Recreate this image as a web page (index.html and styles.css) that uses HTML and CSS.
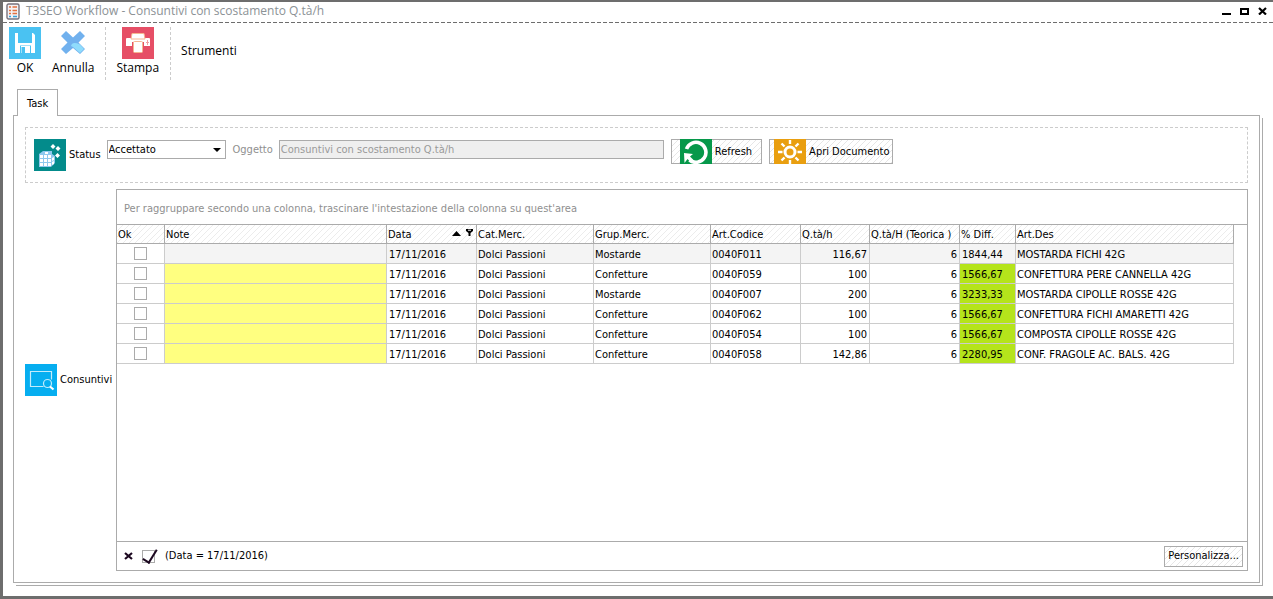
FILE: index.html
```html
<!DOCTYPE html>
<html lang="it">
<head>
<meta charset="utf-8">
<title>T3SEO Workflow - Consuntivi con scostamento Q.tà/h</title>
<link rel="stylesheet" href="styles.css">
</head>
<body>
<div class="window">
  <header class="titlebar">
    <svg class="app-icon" width="14" height="17" viewBox="0 0 14 17"><rect x="1" y="1" width="12" height="15" rx="1.5" fill="#f4f2f4" stroke="#77727c" stroke-width="1.4"/><path d="M3 4h2M3 7.500h2M3 10.500h2M6.500 4h4.500M6.500 7.500h4.500M6.500 10.500h4.500" stroke="#e2703f" stroke-width="1.400"/><path d="M3 13.500h2M7 13.500h4" stroke="#3aa0d8" stroke-width="1.600"/></svg>
    <h1 class="title">T3SEO Workflow - Consuntivi con scostamento Q.tà/h</h1>
    <div class="window-buttons">
      <button class="win-btn" type="button" aria-label="Riduci"><svg width="9" height="8"><path d="M0 7h9" stroke="#000" stroke-width="2"/></svg></button>
      <button class="win-btn" type="button" aria-label="Ingrandisci"><svg width="9" height="8"><rect x="1" y="2" width="7" height="5" fill="none" stroke="#000" stroke-width="2"/></svg></button>
      <button class="win-btn" type="button" aria-label="Chiudi"><svg width="9" height="8"><path d="M1 1l7 6.500M8 1l-7 6.500" stroke="#000" stroke-width="2.200"/></svg></button>
    </div>
  </header>

  <nav class="toolbar">
    <button class="tool" type="button">
      <svg width="32" height="32" viewBox="0 0 32 32"><rect width="32" height="32" fill="#4ac2f2"/><path d="M6 6h3v10h14V6h1l2 2v18H6z" fill="#fff"/><path d="M11 26v-7.500h11V26z" fill="#4ac2f2"/><path d="M12 26v-7h9v7z" fill="#fff"/><rect x="12.500" y="20" width="3.500" height="6" fill="#4ac2f2"/></svg>
      <span>OK</span>
    </button>
    <button class="tool" type="button">
      <svg width="32" height="32" viewBox="0 0 32 32"><path d="M9 4l7 6.500L23 4l5 5-6.500 6.500L28 22l-5 5-7-6-7 6-5-5 6.500-6.500L4 9z" fill="#71b1ee"/><path d="M14 19q1-5 9-1.500l4 4.500-4 4-7-6z" fill="#8fdcfc"/></svg>
      <span>Annulla</span>
    </button>
    <div class="tool-sep"></div>
    <button class="tool" type="button">
      <svg width="32" height="32" viewBox="0 0 32 32"><rect width="32" height="32" fill="#e64f66"/><path d="M4 12q0-1 1-1h22q1 0 1 1v7h-6v-4H10v4H4z" fill="#fff"/><path d="M10 6.500h12l1 5.500H9z" fill="#fff" stroke="#f6b791"/><rect x="11.500" y="14.500" width="9" height="11" rx="1" fill="#fff" stroke="#f6b791"/><path d="M25.500 13v5M24 15.500h3" stroke="#f19da0"/></svg>
      <span>Stampa</span>
    </button>
    <div class="tool-sep"></div>
    <button class="tool-text" type="button">Strumenti</button>
  </nav>

  <main class="content">
    <div class="tabs" role="tablist"><button class="tab" type="button" role="tab" aria-selected="true">Task</button></div>
    <section class="page">
      <form class="task-bar">
        <svg width="32" height="32" viewBox="0 0 32 32"><rect width="32" height="32" fill="#038b8b"/><path d="M5 15l4-3h9v3l3 2v7l-4 4H5z" fill="#8fc9ee"/><g fill="#fff"><path d="M19 5l2.500 2.500L19 10l-2.500-2.500zM24 7l2.500 2.500L24 12l-2.500-2.500zM23.500 14l2.500 2.500-2.500 2.500-2.500-2.500z"/><path d="M6 16h3v3H6zM10 16h3v3h-3zM14 16h3v3h-3zM6 20h3v3H6zM10 20h3v3h-3zM14 20h3v3h-3zM6 24h3v3H6zM10 24h3v3h-3zM14 24h3v3h-3zM11 13h3v2h-3zM18 19l2-1v3l-2 1zM18 23l2-1v3l-2 1z"/></g></svg>
        <label class="status-label" for="status">Status</label>
        <span class="combo"><select id="status"><option>Accettato</option></select></span>
        <label class="muted" for="oggetto">Oggetto</label>
        <input class="subject" id="oggetto" type="text" value="Consuntivi con scostamento Q.tà/h" disabled>
        <button class="btn btn-refresh" type="button"><svg width="32" height="25" viewBox="0 0 32 25"><rect width="32" height="25" fill="#06984a"/><path d="M6.500 10a10 10 0 1 1 3 11" fill="none" stroke="#fff" stroke-width="3.600"/><path d="M4 14l9 1-3 2.500 4 4-2.500 2.500-4-4L4.500 24z" fill="#fff"/></svg>Refresh</button>
        <button class="btn btn-open" type="button"><svg width="32" height="25" viewBox="0 0 32 25"><rect width="32" height="25" fill="#e99f10"/><circle cx="16" cy="13" r="5" fill="none" stroke="#fff" stroke-width="3"/><path d="M16 1v4M16 21v4M4 13h4.500M23.500 13H28M7.500 4.500l3 3M24.500 4.500l-3 3M7.500 21.500l3-3M24.500 21.500l-3-3" stroke="#fff" stroke-width="2.400"/></svg>Apri Documento</button>
      </form>

      <div class="detail">
        <div class="side-label">
          <svg width="32" height="32" viewBox="0 0 32 32"><rect width="32" height="32" fill="#06aef0"/><path d="M18.500 22.500h-13v-15h21v8" fill="none" stroke="#c3ebfb" stroke-width="1.200"/><circle cx="22.500" cy="19.500" r="4" fill="none" stroke="#c3ebfb" stroke-width="1.200"/><path d="M25 22.500l3.500 3" stroke="#fff" stroke-width="2.200"/></svg>
          <span>Consuntivi</span>
        </div>
        <div class="grid">
          <div class="group-bar">Per raggruppare secondo una colonna, trascinare l'intestazione della colonna su quest'area</div>
          <div class="grid-body">
            <table class="rows">
              <colgroup><col class="c-ok"><col class="c-note"><col class="c-date"><col class="c-cat"><col class="c-cat"><col class="c-date"><col class="c-qty"><col class="c-date"><col class="c-diff"><col></colgroup>
              <thead><tr><th>Ok</th><th>Note</th><th><span class="sorted">Data<svg width="22" height="9" viewBox="0 0 22 9"><path d="M0 8l4.500-5L9 8z"/><path d="M14 1h7v2l-2.500 2v3h-2V5L14 3z"/><path d="M16 2.200h3" stroke="#fff"/></svg></span></th><th>Cat.Merc.</th><th>Grup.Merc.</th><th>Art.Codice</th><th>Q.tà/h</th><th>Q.tà/H (Teorica )</th><th>% Diff.</th><th>Art.Des</th></tr></thead>
              <tbody>
                <tr class="current"><td class="ok"><input type="checkbox" aria-label="Ok 0040F011"></td><td class="note"></td><td class="date">17/11/2016</td><td>Dolci Passioni</td><td>Mostarde</td><td>0040F011</td><td class="num">116,67</td><td class="num">6</td><td class="diff">1844,44</td><td>MOSTARDA FICHI 42G</td></tr>
                <tr><td class="ok"><input type="checkbox" aria-label="Ok 0040F059"></td><td class="note"></td><td class="date">17/11/2016</td><td>Dolci Passioni</td><td>Confetture</td><td>0040F059</td><td class="num">100</td><td class="num">6</td><td class="diff">1566,67</td><td>CONFETTURA PERE CANNELLA 42G</td></tr>
                <tr><td class="ok"><input type="checkbox" aria-label="Ok 0040F007"></td><td class="note"></td><td class="date">17/11/2016</td><td>Dolci Passioni</td><td>Mostarde</td><td>0040F007</td><td class="num">200</td><td class="num">6</td><td class="diff">3233,33</td><td>MOSTARDA CIPOLLE ROSSE 42G</td></tr>
                <tr><td class="ok"><input type="checkbox" aria-label="Ok 0040F062"></td><td class="note"></td><td class="date">17/11/2016</td><td>Dolci Passioni</td><td>Confetture</td><td>0040F062</td><td class="num">100</td><td class="num">6</td><td class="diff">1566,67</td><td>CONFETTURA FICHI AMARETTI 42G</td></tr>
                <tr><td class="ok"><input type="checkbox" aria-label="Ok 0040F054"></td><td class="note"></td><td class="date">17/11/2016</td><td>Dolci Passioni</td><td>Confetture</td><td>0040F054</td><td class="num">100</td><td class="num">6</td><td class="diff">1566,67</td><td>COMPOSTA CIPOLLE ROSSE 42G</td></tr>
                <tr><td class="ok"><input type="checkbox" aria-label="Ok 0040F058"></td><td class="note"></td><td class="date">17/11/2016</td><td>Dolci Passioni</td><td>Confetture</td><td>0040F058</td><td class="num">142,86</td><td class="num">6</td><td class="diff">2280,95</td><td>CONF. FRAGOLE AC. BALS. 42G</td></tr>
              </tbody>
            </table>
          </div>
          <div class="filter-bar">
            <button class="clear" type="button" aria-label="Rimuovi filtro"><svg width="9" height="8"><path d="M1 1l7 6M8 1l-7 6" stroke="#1c0820" stroke-width="2.200"/></svg></button>
            <input class="filter-on" id="filtro" type="checkbox" checked>
            <label for="filtro">(Data = 17/11/2016)</label>
            <button class="btn btn-custom" type="button">Personalizza...</button>
          </div>
        </div>
      </div>
    </section>
  </main>
</div>
</body>
</html>
```
FILE: styles.css
```css
* { box-sizing: border-box; }
body {
  margin: 0;
  background: #fff;
  color: #000;
  font: 11px/14px "DejaVu Sans Condensed", "Noto Sans", sans-serif;
}
button, input, select { font: inherit; color: inherit; margin: 0; }
button { border: 0; background: none; padding: 0; }
svg { display: block; flex: none; }
.window {
  min-height: 100vh;
  display: flex;
  flex-direction: column;
  border: solid #6d6d6d;
  border-width: 2px 0 3px 3px;
}
.titlebar {
  height: 21px;
  display: flex;
  align-items: center;
  padding: 0 6px 3px 3px;
  background: repeating-linear-gradient(90deg, #6d6d6d 0 4px, #fff 4px 6px) left bottom / 100% 1px no-repeat;
}
.title { margin: 0 auto 0 6px; font: 12px/16px "Open Sans", sans-serif; color: #8c9296; }
.window-buttons { display: flex; gap: 9px; }
.toolbar {
  display: flex;
  align-items: flex-start;
  padding: 4px 6px 0;
}
.tool { display: flex; flex-direction: column; align-items: center; gap: 1px; min-width: 32px; margin-right: 11px; font: 12px/16px "Open Sans", sans-serif; }
.tool-sep { height: 53px; border-left: 1px dashed #ccc; margin-right: 10px; }
.tool-text { padding-top: 16px; font: 12px/16px "Open Sans", sans-serif; }
.content { flex: 1; display: flex; flex-direction: column; padding: 9px 13px 13px 10px; }
.tabs { display: flex; padding-left: 4px; margin-bottom: -1px; z-index: 1; }
.tab { height: 27px; padding: 2px 9px 0; border: 1px solid #ababab; border-bottom: 0; background: #fff; }
.page {
  flex: 1;
  display: flex;
  flex-direction: column;
  gap: 6px;
  padding: 11px;
  border: 1px solid #ababab;
  box-shadow: 2px 2px 0 #fff, 3px 3px 0 #ababab;
  background: #fff;
}
.task-bar { display: flex; align-items: flex-start; height: 56px; padding: 11px 8px; border: 1px dashed #ccc; }
.status-label { padding: 9px 6px 0 3px; }
.muted { padding: 4px 6px 0 7px; color: #8f8f8f; }
.combo { position: relative; width: 119px; height: 19px; margin-top: 1px; border: 1px solid #ababab; }
.combo select { width: 100%; height: 17px; padding: 0 1px; border: 0; background: none; appearance: none; }
.combo::after { content: ""; position: absolute; right: 4px; top: 7px; border: solid transparent; border-width: 4px 4px 0; border-top-color: #000; }
.subject { width: 385px; height: 19px; margin: 1px 7px 0 0; padding: 0 1px; border: 1px solid #ababab; background: #efefef; color: #9a9a9a; }
.btn {
  display: flex;
  align-items: center;
  height: 25px;
  border: 1px solid #ababab;
  background: linear-gradient(135deg, #fff 42%, #e6e6e6 42% 58%, #fff 58%) 0 0 / 6px 6px;
}
.btn svg { margin: -1px 3px -1px 0; }
.btn-refresh { padding: 0 9px 0 8px; margin-right: 7px; }
.btn-open { padding: 0 3px 0 4px; }
.detail { flex: 1; display: flex; }
.side-label { display: flex; align-items: center; gap: 3px; width: 91px; }
.grid { flex: 1; display: flex; flex-direction: column; border: 1px solid #ababab; }
.group-bar { padding: 12px 7px 8px; color: #8f8f8f; border-bottom: 1px solid #ababab; }
.grid-body { flex: 1; padding-right: 13px; }
.rows { width: 100%; table-layout: fixed; border-collapse: separate; border-spacing: 0; }
.c-ok { width: 48px; }
.c-note { width: 222px; }
.c-date { width: 90px; }
.c-cat { width: 117px; }
.c-qty { width: 69px; }
.c-diff { width: 56px; }
.rows th, .rows td {
  padding: 2px 2px 0 1px;
  border: solid #ccc;
  border-width: 0 1px 1px 0;
  text-align: left;
  font-weight: normal;
  white-space: nowrap;
  line-height: 14px;
}
.rows th { height: 19px; border-color: #ababab; background: linear-gradient(135deg, #fff 42%, #ececec 42% 58%, #fff 58%) 0 0 / 6px 6px; }
.rows td { height: 20px; }
.rows .current td { background: #f4f4f4; }
.rows .ok, .rows .current .ok { padding-top: 0; background: #fff; }
.rows .note { background: #ffff80; }
.rows .date { padding-left: 2px; }
.rows .num { text-align: right; }
.rows .diff { padding-left: 2px; background: #b5e41b; }
.sorted { display: flex; justify-content: space-between; }
input[type="checkbox"] { appearance: none; display: block; width: 13px; height: 13px; border: 1px solid #ababab; background: #fff; }
.ok input { margin: 0 auto; }
.filter-bar { display: flex; align-items: center; height: 29px; padding: 0 4px 0 7px; border-top: 1px solid #ababab; }
.filter-bar label { margin-right: auto; }
input.filter-on { position: relative; margin: 0 10px 0 9px; }
.filter-on::after { content: ""; position: absolute; left: 3px; top: -4px; width: 6px; height: 14px; border: solid #1c0820; border-width: 0 2px 2px 0; transform: rotate(32deg); }
.btn-custom { height: 21px; padding: 0 3px; }
```
